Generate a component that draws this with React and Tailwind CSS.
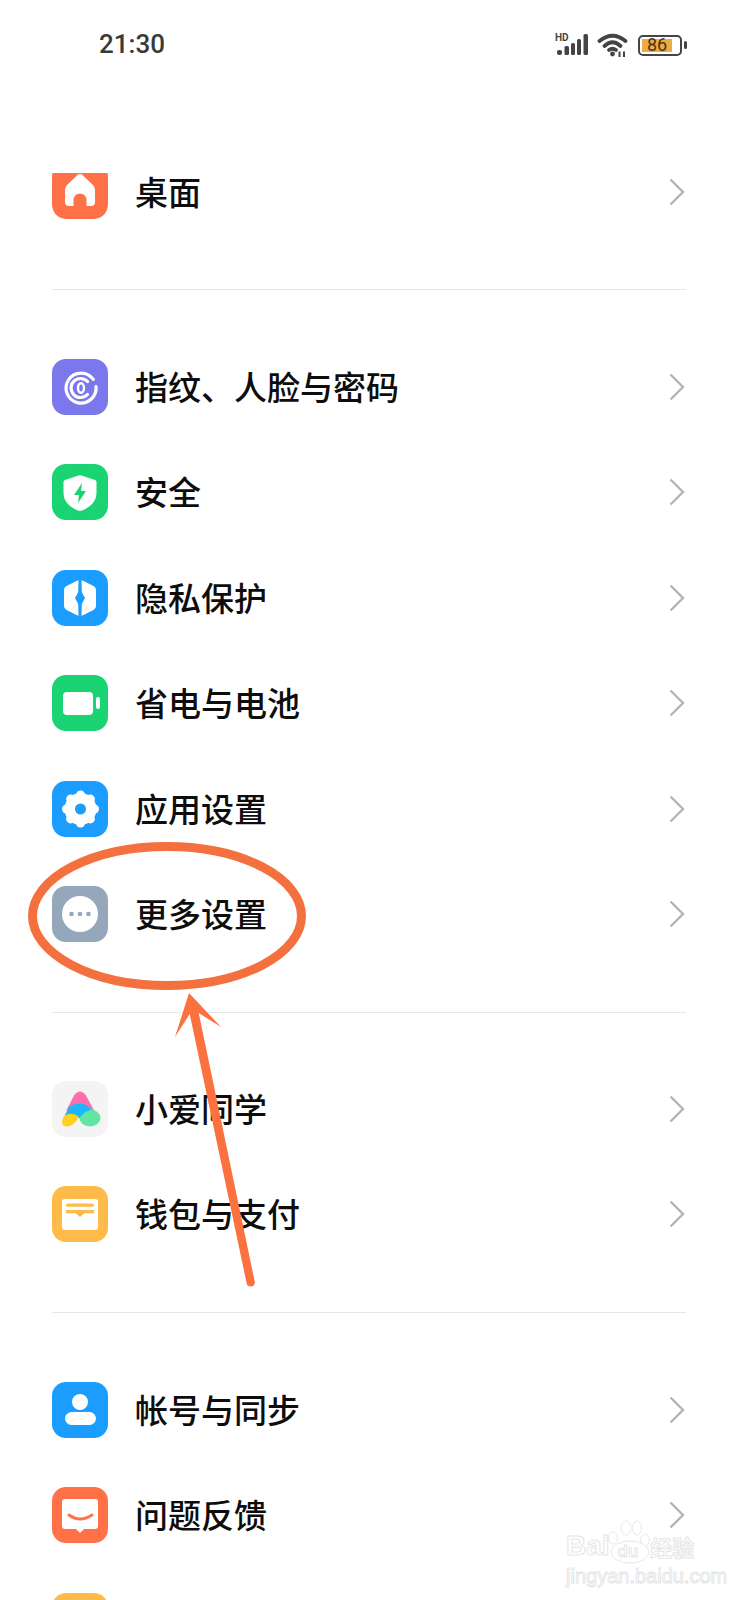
import React from "react";

const ORANGE = "#ff7147";
const GREEN = "#1ad373";
const BLUE = "#1a9dfe";

function Tile({ bg, children }) {
  return (
    <svg width="56" height="56" viewBox="0 0 56 56" className="block shrink-0">
      <rect width="56" height="56" rx="14" fill={bg} />
      {children}
    </svg>
  );
}

function Home() {
  return (
    <svg width="56" height="56" viewBox="0 0 56 56" className="block shrink-0 -mt-[10px]">
      <rect width="56" height="56" rx="14" fill={ORANGE} />
      <path
        d="M28 11C29.2 11 30.2 11.5 31 12.5L41 22Q43 24 43 27V39Q43 43 39 43H34.5V36.5A6.5 6 0 0 0 21.5 36.5V43H17Q13 43 13 39V27Q13 24 15 22L25 12.5C25.8 11.5 26.8 11 28 11Z"
        fill="#fff"
      />
    </svg>
  );
}

function Fingerprint() {
  return (
    <Tile bg="#7b78ee">
      <g fill="none" stroke="#fff" strokeWidth="3.2" strokeLinecap="round">
        <path d="M41.3 20.4A15 15 0 1 0 44 27.7" />
        <path d="M35.5 22.5A9.5 9.5 0 1 0 35.5 35.5" />
        <ellipse cx="29" cy="29" rx="3" ry="4.8" strokeWidth="2.4" />
      </g>
    </Tile>
  );
}

function Shield() {
  return (
    <Tile bg={GREEN}>
      <path
        d="M26.5 11.4Q28 11 29.5 11.4L43 16Q44.5 16.5 44.5 18V29C44.5 39 36 44 30 46.5Q28 47.2 26 46.5C20 44 11.5 39 11.5 29V18Q11.5 16.5 13 16Z"
        fill="#fff"
      />
      <path d="M30 19L22 31H27L26 39L34 27H29Z" fill={GREEN} />
    </Tile>
  );
}

function Privacy() {
  return (
    <Tile bg={BLUE}>
      <path
        d="M25 10.8Q28 9.6 31 10.8L41.5 16Q44 17.2 44 20V36Q44 38.8 41.5 40L31 45.2Q28 46.4 25 45.2L14.5 40Q12 38.8 12 36V20Q12 17.2 14.5 16Z"
        fill="#fff"
      />
      <path d="M26.6 8H29.4L29.8 22L33 28L29.8 34L29.4 48H26.6L26.2 34L23 28L26.2 22Z" fill={BLUE} />
    </Tile>
  );
}

function BatteryIcon() {
  return (
    <Tile bg={GREEN}>
      <rect x="11" y="17" width="30" height="23" rx="4" fill="#fff" />
      <rect x="44" y="22" width="4" height="12" rx="2" fill="#fff" />
    </Tile>
  );
}

function Gear() {
  const petals = [0, 45, 90, 135, 180, 225, 270, 315];
  return (
    <Tile bg={BLUE}>
      <circle cx="28.5" cy="28" r="16" fill="#fff" />
      {petals.map((a) => (
        <circle
          key={a}
          cx={28.5 + 14 * Math.cos((a * Math.PI) / 180)}
          cy={28 + 14 * Math.sin((a * Math.PI) / 180)}
          r="4.5"
          fill="#fff"
        />
      ))}
      <circle cx="28.5" cy="28" r="5.5" fill={BLUE} />
    </Tile>
  );
}

function More() {
  return (
    <Tile bg="#94a7bb">
      <circle cx="28" cy="28" r="18" fill="#fff" />
      <circle cx="19.5" cy="28" r="2.3" fill="#94a7bb" />
      <circle cx="28" cy="28" r="2.3" fill="#94a7bb" />
      <circle cx="36.5" cy="28" r="2.3" fill="#94a7bb" />
    </Tile>
  );
}

function XiaoAi() {
  return (
    <Tile bg="#f4f4f4">
      <path d="M14 30L22 14.5Q28 6.5 34 14.5L43 31Q30 18 14 30Z" fill="#ff6fae" />
      <ellipse cx="38" cy="37" rx="10.5" ry="8.5" fill="#63e5a2" />
      <path d="M12 36L17 26Q29 18 40 28.5L37 29.5Q31 31 27.5 37.5Q19 31 12 36Z" fill="#1eb6f7" />
      <path d="M10 40Q11 34 17 33Q23 32 27 36.5Q21 45.5 15 45.5Q10 45.5 10 40Z" fill="#ffd01f" />
    </Tile>
  );
}

function Wallet({ color = "#ffbb4a" }) {
  return (
    <Tile bg={color}>
      <rect x="10" y="13" width="36" height="31" rx="3" fill="#fff" />
      <rect x="14" y="17.5" width="28" height="3.2" rx="1.6" fill={color} />
      <path d="M14 24H42V27.2H32.5L28 31L23.5 27.2H14Z" fill={color} />
    </Tile>
  );
}

function Account() {
  return (
    <Tile bg={BLUE}>
      <circle cx="28" cy="20" r="8" fill="#fff" />
      <rect x="13" y="30" width="31" height="13" rx="6.5" fill="#fff" />
    </Tile>
  );
}

function Feedback() {
  return (
    <Tile bg={ORANGE}>
      <path
        d="M13 12H43Q46 12 46 15V39Q46 42 43 42H32L28 46L24 42H13Q10 42 10 39V15Q10 12 13 12Z"
        fill="#fff"
      />
      <path d="M17 28Q28 36 40 28" fill="none" stroke={ORANGE} strokeWidth="3" strokeLinecap="round" />
    </Tile>
  );
}

function Chevron() {
  return (
    <svg width="16" height="28" viewBox="0 0 16 28" className="mr-[1px] shrink-0">
      <path d="M1.5 1.5L14 14L1.5 26.5" fill="none" stroke="#b4b4b4" strokeWidth="2.4" />
    </svg>
  );
}

function Row({ icon, label }) {
  return (
    <div className="flex h-[105.5px] items-center">
      {icon}
      <span className="mb-[1px] ml-[27px] flex-1 text-[33px] leading-none font-medium text-[#0d0d0d]">{label}</span>
      <Chevron />
    </div>
  );
}

function StatusBar() {
  return (
    <div className="flex h-[139px] items-start justify-between pt-[33px] pr-[51px] pl-[99px]">
      <span className="text-[26px] leading-[22px] font-medium text-[#3a3a3a] font-['Roboto',sans-serif]">21:30</span>
      <div className="flex items-center gap-[9px]">
        <svg width="33" height="24" viewBox="0 0 33 24">
          <text x="0" y="8" fontSize="10" fontWeight="700" fontFamily="Roboto, sans-serif" fill="#444">
            HD
          </text>
          <rect x="2" y="17" width="5" height="5" rx="2" fill="#444" />
          <rect x="9.5" y="13" width="4.5" height="9" rx="1.5" fill="#444" />
          <rect x="16" y="10" width="4" height="12" rx="1.5" fill="#444" />
          <rect x="22" y="6" width="4" height="16" rx="1.5" fill="#444" />
          <rect x="28.5" y="1" width="4.5" height="21" rx="1.5" fill="#444" />
        </svg>
        <svg width="32" height="24" viewBox="0 0 32 24">
          <g fill="none" stroke="#444" strokeWidth="3.8" strokeLinecap="round">
            <path d="M2.5 8Q15.5 -2.5 28.5 8" />
            <path d="M7.5 13Q15.5 5.5 23.5 13" />
            <path d="M12 17Q15.5 14.5 19 17" />
          </g>
          <circle cx="15.5" cy="21" r="2.4" fill="#444" />
          <path d="M22.5 24V18.5M27 24V18.5" stroke="#444" strokeWidth="2" />
        </svg>
        <div className="flex items-center gap-[2px]">
          <div className="flex h-[21px] w-[44px] items-center rounded-[5px] border-2 border-[#444] p-[2px]">
            <div className="flex h-full w-[30px] items-center justify-center bg-[#eeab45] text-[18px] leading-none text-[#4a3210] font-['Roboto',sans-serif]">
              86
            </div>
          </div>
          <div className="h-[8px] w-[3px] rounded-full bg-[#444]" />
        </div>
      </div>
    </div>
  );
}

function Annotation() {
  return (
    <svg width="738" height="1600" viewBox="0 0 738 1600" className="pointer-events-none absolute top-0 left-0">
      <ellipse cx="167" cy="916" rx="134.5" ry="69.5" fill="none" stroke="#f4713f" strokeWidth="9" />
      <path d="M189 993L221 1027L198.7 1013L255 1283Q253 1289 247 1285L189.7 1014L175 1037Z" fill="#fb7240" />
    </svg>
  );
}

function Watermark() {
  return (
    <div className="pointer-events-none absolute top-[1518px] left-[566px] w-[136px] font-['Liberation_Sans','Noto_Sans_CJK_SC',sans-serif] text-white [-webkit-text-stroke:1px_#e6e6e6]">
      <svg width="60" height="48" viewBox="0 0 60 48" className="absolute top-0 left-[42px]">
        <g fill="#fff" stroke="#e8e8e8" strokeWidth="1">
          <ellipse cx="5" cy="20" rx="4.5" ry="6" />
          <ellipse cx="18" cy="10" rx="5" ry="7" />
          <ellipse cx="29" cy="10" rx="4.5" ry="7" />
          <ellipse cx="37" cy="22" rx="4.5" ry="6" />
          <ellipse cx="22" cy="34" rx="19" ry="11" />
        </g>
      </svg>
      <div className="relative flex h-[42px] items-end">
        <span className="text-[28px] leading-none font-bold">Bai</span>
        <span className="ml-[8px] text-[17px] leading-none font-bold">du</span>
        <span className="ml-[12px] text-[22px] leading-none font-bold">经验</span>
      </div>
      <div className="relative mt-[6px] whitespace-nowrap text-[20px] leading-none">jingyan.baidu.com</div>
    </div>
  );
}

export default function App() {
  return (
    <div className="relative h-[1600px] w-[738px] overflow-hidden bg-white font-['Noto_Sans_CJK_SC','Noto_Sans',sans-serif]">
      <StatusBar />
      <div className="px-[52px]">
        <Row
          label="桌面"
          icon={
            <div className="mt-2 h-[46px] w-[56px] shrink-0 overflow-hidden rounded-b-[14px]">
              <Home />
            </div>
          }
        />
        <div className="mt-[44.5px] mb-[44px] h-px bg-[#e6e6e6]" />
        <Row label="指纹、人脸与密码" icon={<Fingerprint />} />
        <Row label="安全" icon={<Shield />} />
        <Row label="隐私保护" icon={<Privacy />} />
        <Row label="省电与电池" icon={<BatteryIcon />} />
        <Row label="应用设置" icon={<Gear />} />
        <Row label="更多设置" icon={<More />} />
        <div className="mt-[45px] mb-[43px] h-px bg-[#e6e6e6]" />
        <Row label="小爱同学" icon={<XiaoAi />} />
        <Row label="钱包与支付" icon={<Wallet />} />
        <div className="mt-[45px] mb-[44px] h-px bg-[#e6e6e6]" />
        <Row label="帐号与同步" icon={<Account />} />
        <Row label="问题反馈" icon={<Feedback />} />
        <Row label="" icon={<Wallet />} />
      </div>
      <Annotation />
      <Watermark />
    </div>
  );
}
